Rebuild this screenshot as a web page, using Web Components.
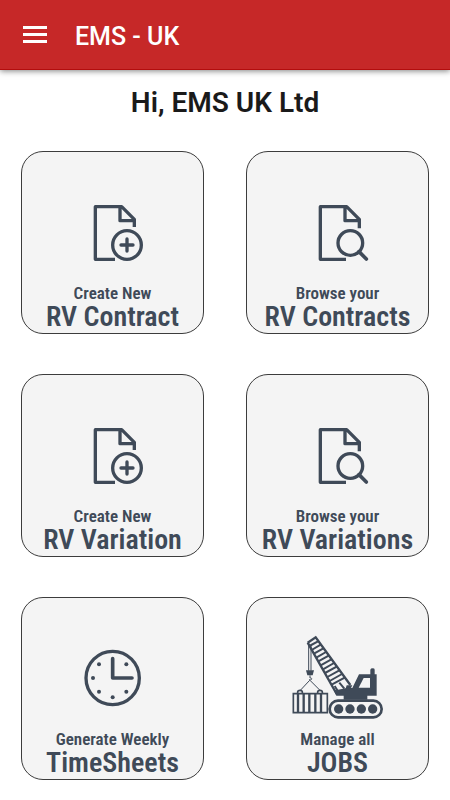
<!DOCTYPE html>
<html lang="en">
<head>
<meta charset="utf-8">
<meta name="viewport" content="width=device-width, initial-scale=1">
<title>EMS - UK</title>
<style>
body { margin: 0; background: #fff; font-family: Roboto, "Liberation Sans", sans-serif; }
</style>
</head>
<body>
<ems-app></ems-app>

<template id="app-bar">
<style>
:host { display: block; position: relative; box-shadow: 0 1px 6px rgba(0,0,0,.5); }
header { display: flex; align-items: center; gap: 25px; height: 69px; padding: 0 20px; background: #c62828; border-bottom: 1px solid #b30d0d; color: #fff; }
button { display: flex; padding: 3px; margin: 0; border: 0; background: none; color: inherit; cursor: pointer; }
svg { display: block; width: 24px; height: 24px; }
h1 { margin: 4px 0 0; font-size: 25px; line-height: 32px; font-weight: 500; }
</style>
<header>
<button type="button" aria-label="Open menu"><svg viewBox="0 0 24 24" fill="currentColor" aria-hidden="true"><path d="M0 3h24v3H0zM0 10h24v3H0zM0 17h24v3H0z"/></svg></button>
<h1><slot></slot></h1>
</header>
</template>

<template id="tile-icon">
<style>
:host { display: block; }
svg { display: none; width: 100px; height: 90px; color: #3f4a58; }
:host([name="create"]) .create, :host([name="browse"]) .browse, :host([name="clock"]) .clock, :host([name="crane"]) .crane { display: block; }
</style>
<svg class="create" viewBox="-51 -21 300 270" fill="none" stroke="currentColor" stroke-width="10" stroke-linejoin="round" aria-hidden="true">
<path d="M105 193H46V35H125L163 73V96M120 36V77H163"/>
<circle cx="141" cy="150" r="43"/><path d="M141 132V168M123 150H159" stroke-linecap="round"/>
</svg>
<svg class="browse" viewBox="-51 -21 300 270" fill="none" stroke="currentColor" stroke-width="10" stroke-linejoin="round" aria-hidden="true">
<path d="M123 193H46V35H125L163 73V100M120 36V77H163"/>
<circle cx="136" cy="144" r="37"/><path d="M162 170L184 192" stroke-width="11" stroke-linecap="round"/>
</svg>
<svg class="clock" viewBox="-21 -18 300 270" fill="none" stroke="currentColor" stroke-width="10" aria-hidden="true">
<circle cx="128" cy="114" r="80"/>
<path d="M128 56V114H186" stroke-width="11" stroke-linecap="round" stroke-linejoin="round"/>
<g fill="currentColor" stroke="none"><circle cx="87" cy="73" r="6"/><circle cx="169" cy="73" r="6"/><circle cx="69" cy="114" r="6"/><circle cx="87" cy="155" r="6"/><circle cx="169" cy="155" r="6"/><circle cx="128" cy="172" r="6"/></g>
</svg>
<svg class="crane" viewBox="9 12 300 270" fill="none" stroke="currentColor" aria-hidden="true">
<path d="M68 38L92 22L196 165M68 38L155 192" stroke-width="7"/>
<path d="M73 48L99 34M80 60L107 44M87 71L115 55M94 83L123 66M100 94L131 77M107 106L139 88M114 118L147 99M120 129L155 110M127 141L163 121M134 153L171 132M140 164L179 143M149 168L159 184M163 158L178 176" stroke-width="6"/>
<path d="M71 40V122M78 48V122" stroke-width="3"/>
<path d="M63 121H87L83 136H67Z" fill="currentColor" stroke="none"/>
<path d="M75 136V144C84 143 80 153 72 149M74 151L46 181M75 151L105 181" stroke-width="3"/>
<path d="M38 191V186Q38 181 45 181Q52 181 52 186V191M98 191V186Q98 181 105 181Q112 181 112 186V191" stroke-width="5"/>
<path d="M25 191H127V248H25Z" stroke-width="5"/>
<path d="M39 191V248M56 191V248M73 191V248M91 191V248M108 191V248" stroke-width="7"/>
<path d="M142 170L152 181L185 174H202L222 133H256V119Q257 115 263 115Q269 115 269 119V133H275V197H247V209H176V197H154Z" fill="currentColor" stroke="none"/>
<path d="M185 166H202L194 182H180Z" fill="currentColor" stroke="none"/>
<path d="M236 144H255V173H221Z" fill="#f4f4f4" stroke="none"/>
<rect x="134" y="212" width="156" height="50" rx="25" stroke-width="8"/>
<g fill="currentColor" stroke="none"><circle cx="161" cy="237" r="14"/><circle cx="195" cy="237" r="14"/><circle cx="229" cy="237" r="14"/><circle cx="263" cy="237" r="14"/></g>
</svg>
</template>

<template id="menu-tile">
<style>
:host { display: block; }
button { display: flex; flex-direction: column; align-items: center; justify-content: flex-end; box-sizing: border-box; width: 100%; aspect-ratio: 1; margin: 0; padding: 0 0 2px; border: 1px solid #3c3c3c; border-radius: 22px; background: #f4f4f4; color: #3f4a58; font-family: "Roboto Condensed", "Liberation Sans Narrow", "Liberation Sans", sans-serif; white-space: nowrap; cursor: pointer; }
tile-icon { margin-bottom: 6px; }
.lead { font-size: 17px; line-height: 19px; font-weight: 600; }
.name { font-size: 28px; line-height: 28px; font-weight: 600; }
</style>
<button type="button"><tile-icon></tile-icon><span class="lead"><slot name="lead"></slot></span><span class="name"><slot></slot></span></button>
</template>

<template id="ems-app">
<style>
:host { display: block; }
h2 { margin: 0; padding: 17px 16px 0; text-align: center; font-size: 28px; line-height: 32px; font-weight: 600; color: #1a1a1a; }
main { display: grid; grid-template-columns: 1fr 1fr; gap: 40px 42px; padding: 32px 21px 20px; }
</style>
<app-bar>EMS - UK</app-bar>
<h2>Hi, EMS UK Ltd</h2>
<main>
<menu-tile icon="create"><span slot="lead">Create New</span>RV Contract</menu-tile>
<menu-tile icon="browse"><span slot="lead">Browse your</span>RV Contracts</menu-tile>
<menu-tile icon="create"><span slot="lead">Create New</span>RV Variation</menu-tile>
<menu-tile icon="browse"><span slot="lead">Browse your</span>RV Variations</menu-tile>
<menu-tile icon="clock"><span slot="lead">Generate Weekly</span>TimeSheets</menu-tile>
<menu-tile icon="crane"><span slot="lead">Manage all</span>JOBS</menu-tile>
</main>
</template>

<script>
class BaseElement extends HTMLElement {
  constructor() {
    super();
    this.attachShadow({ mode: "open" }).append(
      document.getElementById(this.localName).content.cloneNode(true));
  }
}
class AppBar extends BaseElement {}
class TileIcon extends BaseElement {}
class MenuTile extends BaseElement {
  connectedCallback() {
    this.shadowRoot.querySelector("tile-icon").setAttribute("name", this.getAttribute("icon"));
  }
}
class EmsApp extends BaseElement {}
customElements.define("app-bar", AppBar);
customElements.define("tile-icon", TileIcon);
customElements.define("menu-tile", MenuTile);
customElements.define("ems-app", EmsApp);
</script>
</body>
</html>
